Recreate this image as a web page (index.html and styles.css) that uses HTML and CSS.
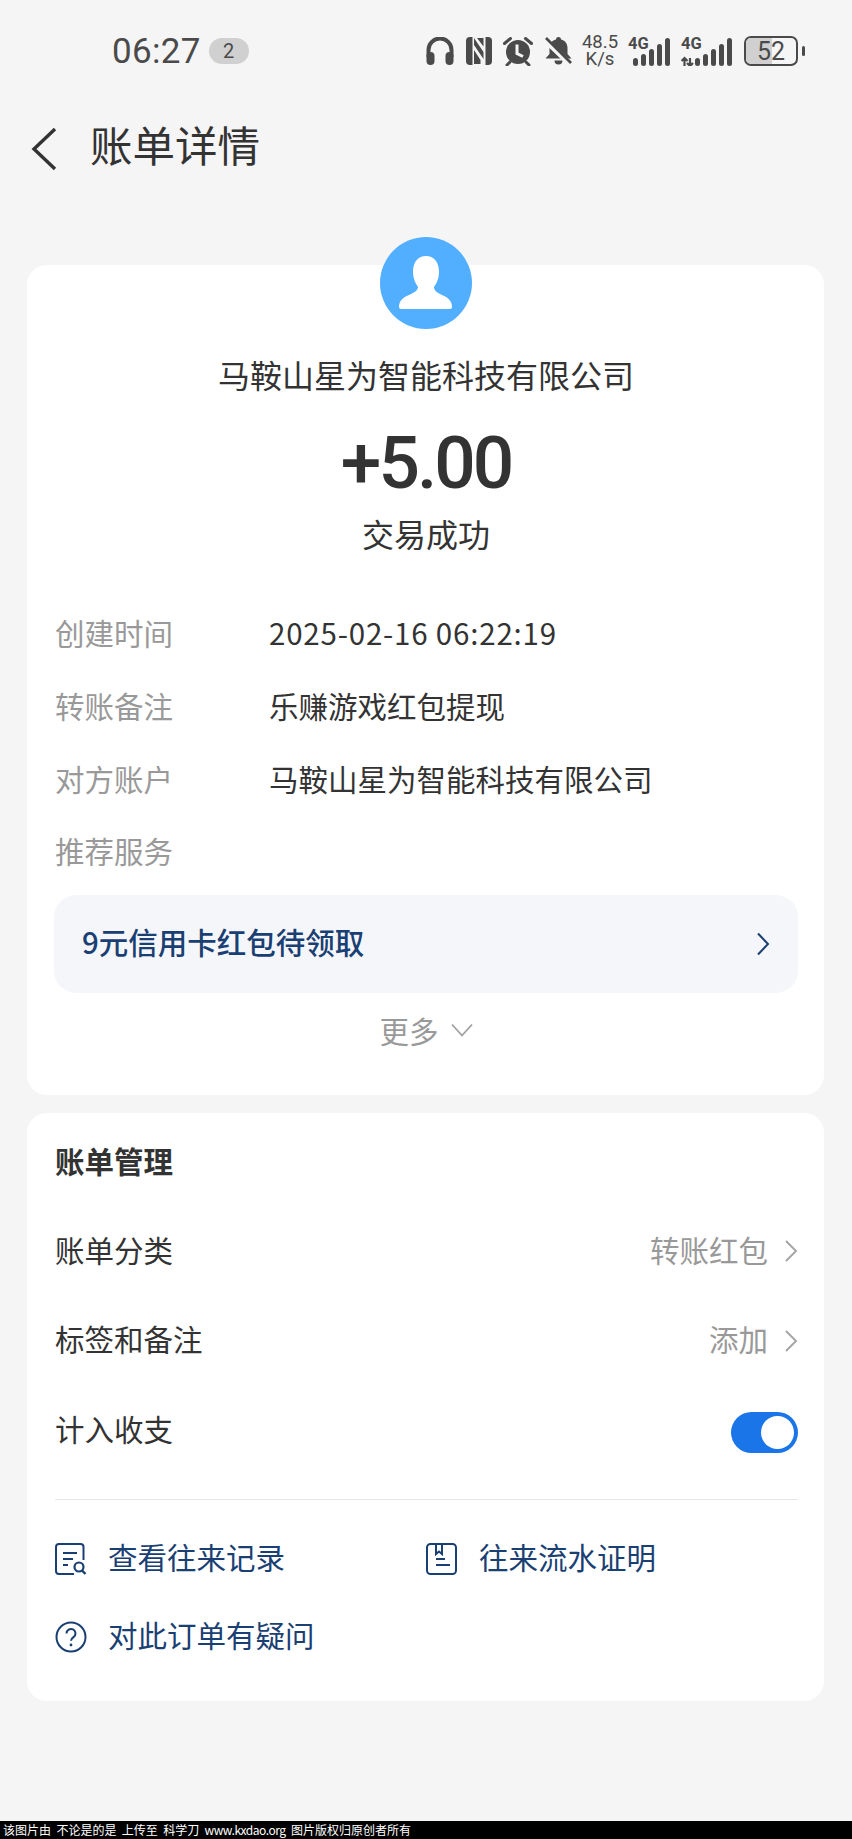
FILE: index.html
```html
<!DOCTYPE html>
<html lang="zh-CN">
<head>
    <meta charset="UTF-8">
    <meta name="viewport" content="width=device-width, initial-scale=1.0">
    <title>账单详情</title>
    <link rel="stylesheet" href="styles.css">
</head>
<body>
    <div class="status-bar">
        <div class="status-left">
            <span class="clock">06:27</span>
            <span class="clock-badge">2</span>
        </div>
        <div class="status-right">
            <svg class="st-icon" width="28" height="28" viewBox="0 0 28 28">
                <path d="M2.500 20v-7a11.500 11.500 0 0 1 23 0v7" fill="none" stroke="#4a4a4a" stroke-width="4"/>
                <rect x="0.500" y="15" width="8" height="13" rx="4" fill="#4a4a4a"/>
                <rect x="19.500" y="15" width="8" height="13" rx="4" fill="#4a4a4a"/>
            </svg>
            <svg class="st-icon nfc" width="26" height="28" viewBox="0 0 26 28">
                <path d="M6.500 0H4A4 4 0 0 0 0 4V24A4 4 0 0 0 4 28H6.500Z" fill="#4a4a4a"/>
                <path d="M19.500 0H22A4 4 0 0 1 26 4V24A4 4 0 0 1 22 28H19.500Z" fill="#4a4a4a"/>
                <path d="M8 1L17.500 15V22L8 8ZM8 13L14.500 23V27H8ZM11 1H17.500V9.500Z" fill="#4a4a4a"/>
            </svg>
            <svg class="st-icon alarm" width="30" height="30" viewBox="0 0 30 30">
                <circle cx="15" cy="16" r="12" fill="#4a4a4a"/>
                <path d="M14 8.500v9l6 3" fill="none" stroke="#f5f5f5" stroke-width="3"/>
                <path d="M1.500 7.500L7.500 2.500M28.500 7.500L22.500 2.500M7 26L4 29M23 26L26 29" stroke="#4a4a4a" stroke-width="3" stroke-linecap="round"/>
            </svg>
            <svg class="st-icon bell" width="27" height="28" viewBox="0 0 27 28">
                <path d="M13.500 0a2.500 2.500 0 0 1 2.500 2.500c4.500 1 6.500 4.500 6.500 8.500v6l4 4.500H.5l4-4.500v-6c0-4 2-7.500 6.500-8.500a2.500 2.500 0 0 1 2.500-2.500Z" fill="#4a4a4a"/>
                <path d="M9.500 23.500h8a4 4 0 0 1-8 0Z" fill="#4a4a4a"/>
                <path d="M0 3L25 27" stroke="#f5f5f5" stroke-width="5.500"/>
                <path d="M1 1L26 26" stroke="#4a4a4a" stroke-width="2.600"/>
            </svg>
            <div class="speed"><span>48.5</span><span>K/s</span></div>
            <div class="signal">
                <span class="net">4G</span>
                <svg width="42" height="28" viewBox="0 0 42 28">
                    <rect x="5" y="20" width="5" height="8" rx="2.500" fill="#4a4a4a"/>
                    <rect x="13" y="16" width="5" height="12" rx="2.500" fill="#4a4a4a"/>
                    <rect x="21" y="11" width="5" height="17" rx="2.500" fill="#4a4a4a"/>
                    <rect x="29" y="6" width="5" height="22" rx="2.500" fill="#4a4a4a"/>
                    <rect x="37" y="0" width="5" height="28" rx="2.500" fill="#4a4a4a"/>
                </svg>
            </div>
            <div class="signal second">
                <span class="net">4G</span>
                <svg width="51" height="28" viewBox="2 0 51 28">
                    <path d="M5.500 28v-8M2.500 23l3-3 3 3M11 20v8M8 25l3 3 3-3" fill="none" stroke="#4a4a4a" stroke-width="2.200"/>
                    <rect x="16" y="20" width="5" height="8" rx="2.500" fill="#4a4a4a"/>
                    <rect x="24" y="16" width="5" height="12" rx="2.500" fill="#4a4a4a"/>
                    <rect x="32" y="11" width="5" height="17" rx="2.500" fill="#4a4a4a"/>
                    <rect x="40" y="6" width="5" height="22" rx="2.500" fill="#4a4a4a"/>
                    <rect x="48" y="0" width="5" height="28" rx="2.500" fill="#4a4a4a"/>
                </svg>
            </div>
            <div class="battery">
                <div class="battery-body"><span class="battery-fill"></span><span class="battery-num">52</span></div>
                <span class="battery-nub"></span>
            </div>
        </div>
    </div>

    <div class="nav-bar">
        <svg class="back" width="26" height="44" viewBox="0 0 26 44">
            <path d="M24 2L3 22L24 42" fill="none" stroke="#333" stroke-width="3.400"/>
        </svg>
        <h1 class="nav-title">账单详情</h1>
    </div>

    <div class="card top-card">
        <div class="avatar">
            <svg width="92" height="92" viewBox="0 0 92 92">
                <circle cx="46" cy="46" r="46" fill="#52aeff"/>
                <path d="M46 19c8 0 13 6 13 16c0 6-2 11-5 15c0 3 2 5 6 7c7 3 12 6 12 13c0 1-1 2-2 2H21c-1 0-2-1-2-2c0-7 5-10 12-13c4-2 7-4 7-7c-3-4-5-9-5-15c0-10 5-16 13-16Z" fill="#fff"/>
            </svg>
        </div>
        <div class="payee">马鞍山星为智能科技有限公司</div>
        <div class="amount">+5.00</div>
        <div class="pay-status">交易成功</div>

        <div class="info-list">
            <div class="info-row"><span class="info-label">创建时间</span><span class="info-value date">2025-02-16 06:22:19</span></div>
            <div class="info-row"><span class="info-label">转账备注</span><span class="info-value">乐赚游戏红包提现</span></div>
            <div class="info-row"><span class="info-label">对方账户</span><span class="info-value">马鞍山星为智能科技有限公司</span></div>
            <div class="info-row"><span class="info-label">推荐服务</span></div>
        </div>

        <div class="promo">
            <span class="promo-text">9元信用卡红包待领取</span>
            <svg width="14" height="24" viewBox="0 0 14 24"><path d="M2 1.500L12 12L2 22.500" fill="none" stroke="#1a3f73" stroke-width="2"/></svg>
        </div>
        <div class="more">
            <span>更多</span>
            <svg width="22" height="14" viewBox="0 0 22 14"><path d="M1 1.500L11 12.500L21 1.500" fill="none" stroke="#a0a0a0" stroke-width="1.800"/></svg>
        </div>
    </div>

    <div class="card manage-card">
        <h2 class="manage-title">账单管理</h2>
        <div class="manage-row">
            <span>账单分类</span>
            <span class="manage-right">转账红包
                <svg width="14" height="24" viewBox="0 0 14 24"><path d="M2 2L12 12L2 22" fill="none" stroke="#a6a6a6" stroke-width="2"/></svg>
            </span>
        </div>
        <div class="manage-row">
            <span>标签和备注</span>
            <span class="manage-right">添加
                <svg width="14" height="24" viewBox="0 0 14 24"><path d="M2 2L12 12L2 22" fill="none" stroke="#a6a6a6" stroke-width="2"/></svg>
            </span>
        </div>
        <div class="manage-row">
            <span>计入收支</span>
            <span class="toggle"><span class="toggle-knob"></span></span>
        </div>
        <div class="divider"></div>
        <div class="links">
            <div class="link">
                <svg width="32" height="32" viewBox="0 0 32 32">
                    <path d="M28.500 17V4a3 3 0 0 0-3-3H4a3 3 0 0 0-3 3v24a3 3 0 0 0 3 3h15" fill="none" stroke="#1a3f73" stroke-width="2"/>
                    <path d="M8 10h14M8 16h10M8 22h5" stroke="#1a3f73" stroke-width="2"/>
                    <circle cx="24" cy="24" r="4.500" fill="none" stroke="#1a3f73" stroke-width="2.200"/>
                    <path d="M27 27.500l3.500 3.500" stroke="#1a3f73" stroke-width="2.400"/>
                </svg>
                <span>查看往来记录</span>
            </div>
            <div class="link">
                <svg width="32" height="32" viewBox="0 0 32 32">
                    <rect x="1" y="1" width="29" height="30" rx="3.500" fill="none" stroke="#1a3f73" stroke-width="2"/>
                    <path d="M10 1v10l3-2.500l3 2.500V1" fill="none" stroke="#1a3f73" stroke-width="2"/>
                    <path d="M10 16h9M10 22h14" stroke="#1a3f73" stroke-width="2"/>
                </svg>
                <span>往来流水证明</span>
            </div>
            <div class="link">
                <svg width="32" height="32" viewBox="0 0 32 32">
                    <circle cx="16" cy="16" r="14.500" fill="none" stroke="#1a3f73" stroke-width="2"/>
                    <path d="M11.500 12.500a4.500 4.500 0 1 1 7 3.700c-1.500 1-2.500 1.800-2.500 3.600" fill="none" stroke="#1a3f73" stroke-width="2"/>
                    <circle cx="16" cy="24" r="1.400" fill="#1a3f73"/>
                </svg>
                <span>对此订单有疑问</span>
            </div>
        </div>
    </div>

    <div class="watermark">该图片由&nbsp; 不论是的是&nbsp; 上传至&nbsp; 科学刀&nbsp; <span class="watermark-url">www.kxdao.org</span>&nbsp; 图片版权归原创者所有</div>
</body>
</html>
```

FILE: styles.css
```css
* {
    box-sizing: border-box;
}
html, body {
    margin: 0;
    padding: 0;
}
body {
    display: flex;
    flex-direction: column;
    min-height: 1839px;
    background-color: #f5f5f5;
    color: #333;
    font-family: "Noto Sans CJK SC", "Noto Sans", sans-serif;
    font-size: 29.5px;
    overflow: hidden;
}

/* status bar */
.status-bar {
    display: flex;
    justify-content: space-between;
    align-items: center;
    height: 102px;
    padding: 0 47px 0 112px;
    color: #4a4a4a;
}
.status-left {
    display: flex;
    align-items: center;
    gap: 8px;
}
.clock {
    font-family: Roboto, sans-serif;
    font-size: 35px;
    letter-spacing: 0.3px;
}
.clock-badge {
    display: flex;
    align-items: center;
    justify-content: center;
    width: 40px;
    height: 26px;
    border-radius: 13px;
    background-color: #d0d0d0;
    font-family: Roboto, sans-serif;
    font-size: 20px;
}
.status-right {
    display: flex;
    align-items: center;
}
.st-icon {
    display: block;
    flex: none;
}
.nfc {
    margin-left: 12px;
}
.alarm {
    margin-left: 11px;
}
.bell {
    margin-left: 12px;
}
.speed {
    display: flex;
    flex-direction: column;
    align-items: center;
    width: 38px;
    margin-left: 9px;
    font-family: Roboto, sans-serif;
    font-size: 18.500px;
    line-height: 17px;
}
.signal {
    position: relative;
    display: flex;
    align-items: flex-end;
    height: 30px;
    margin-left: 9px;
}
.signal.second {
    margin-left: 11px;
}
.net {
    position: absolute;
    left: 0;
    top: 0;
    font-family: Roboto, sans-serif;
    font-size: 16.500px;
    font-weight: 700;
    line-height: 16px;
}
.battery {
    display: flex;
    align-items: center;
    margin-left: 12px;
}
.battery-body {
    position: relative;
    display: flex;
    align-items: center;
    justify-content: center;
    width: 54px;
    height: 30px;
    border: 2px solid #4a4a4a;
    border-radius: 7px;
    overflow: hidden;
}
.battery-fill {
    position: absolute;
    left: 0;
    top: 0;
    bottom: 0;
    width: 52%;
    background-color: #d0d0d0;
}
.battery-num {
    position: relative;
    font-family: Roboto, sans-serif;
    font-size: 25px;
}
.battery-nub {
    width: 3px;
    height: 10px;
    margin-left: 4px;
    border-radius: 2px;
    background-color: #4a4a4a;
}

/* nav */
.nav-bar {
    display: flex;
    align-items: center;
    height: 84px;
    padding-left: 31px;
}
.back {
    display: block;
    margin-top: 10px;
}
.nav-title {
    margin: 0 0 0 33px;
    font-size: 42.500px;
    font-weight: 400;
    line-height: 60px;
    color: #333;
}

/* cards */
.card {
    width: 797px;
    margin: 0 auto 0 27px;
    background-color: #fff;
    border-radius: 20px;
}
.top-card {
    display: flex;
    flex-direction: column;
    height: 830px;
    margin-top: 79px;
    padding: 0 26px 0 27px;
}
.avatar {
    align-self: center;
    height: 92px;
    margin-top: -28px;
}
.avatar svg {
    display: block;
}
.payee {
    margin-top: 23px;
    font-size: 32px;
    line-height: 44px;
    text-align: center;
}
.amount {
    margin-top: 24px;
    font-family: Roboto, sans-serif;
    font-size: 73px;
    font-weight: 500;
    line-height: 86px;
    letter-spacing: -3px;
    text-align: center;
}
.pay-status {
    margin-top: 5px;
    font-size: 32px;
    line-height: 44px;
    text-align: center;
}
.info-list {
    margin-top: 41px;
    padding-left: 1px;
}
.info-row {
    display: flex;
    align-items: center;
    height: 72.700px;
}
.info-label {
    width: 214px;
    color: #999;
}
.info-value {
    color: #333;
}
.date {
    letter-spacing: 0.800px;
}
.promo {
    display: flex;
    justify-content: space-between;
    align-items: center;
    flex: none;
    height: 98px;
    margin-top: 8px;
    padding: 0 28px 0 28px;
    border-radius: 22px;
    background-color: #f4f6fa;
    color: #1a3f73;
    font-weight: 500;
}
.promo-text {
    padding-bottom: 6px;
}
.more {
    display: flex;
    justify-content: center;
    align-items: center;
    gap: 12px;
    margin-top: 15px;
    line-height: 44px;
    color: #999;
}

.manage-card {
    height: 588px;
    margin-top: 18px;
    padding: 0 26px 0 28px;
}
.manage-title {
    margin: 0;
    padding-top: 25px;
    font-size: 29.500px;
    font-weight: 700;
    line-height: 44px;
}
.manage-row {
    display: flex;
    justify-content: space-between;
    align-items: center;
    height: 89.500px;
    padding-bottom: 8px;
}
.manage-title + .manage-row {
    margin-top: 26px;
}
.manage-right {
    display: flex;
    align-items: center;
    gap: 16px;
    color: #999;
}
.manage-right svg {
    margin-top: 5px;
}
.toggle {
    position: relative;
    display: block;
    width: 67px;
    height: 41px;
    margin-top: 10px;
    border-radius: 21px;
    background-color: #1a75e8;
}
.toggle-knob {
    position: absolute;
    right: 4px;
    top: 4px;
    width: 33px;
    height: 33px;
    border-radius: 50%;
    background-color: #fff;
}
.divider {
    height: 1px;
    margin-top: 22px;
    background-color: #e6e6e6;
}
.links {
    display: grid;
    grid-template-columns: 371px 1fr;
    grid-auto-rows: 78px;
    margin-top: 21px;
}
.link {
    display: flex;
    align-items: center;
    gap: 21px;
    padding-bottom: 8px;
    color: #1a3f73;
}
.link svg {
    flex: none;
    margin-top: 7px;
}

.watermark {
    height: 18px;
    margin-top: auto;
    padding-left: 3px;
    background-color: #000;
    color: #fff;
    font-size: 12px;
    line-height: 18px;
    white-space: nowrap;
}
.watermark-url {
    letter-spacing: -0.450px;
}
```
